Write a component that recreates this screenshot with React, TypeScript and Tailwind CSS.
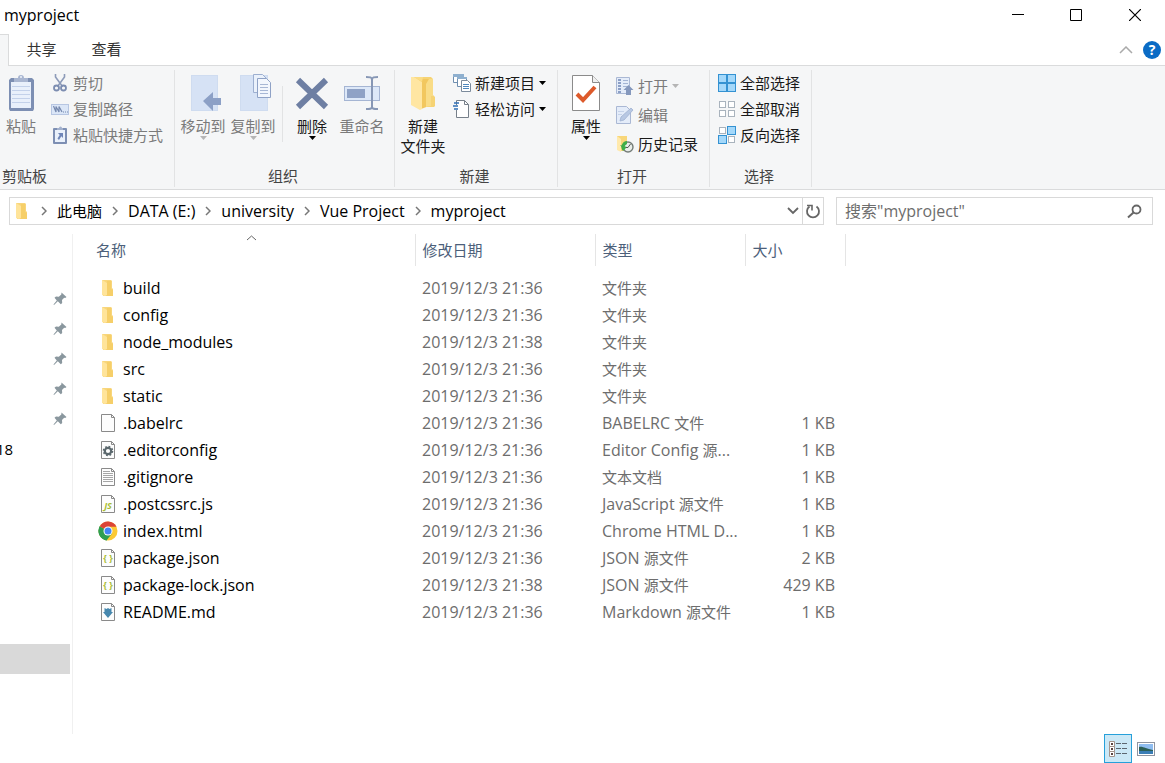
import React from "react";

type IconProps = { className?: string };

/* ---------- ribbon icons ---------- */

const PasteIcon = () => (
  <svg width="28" height="38" viewBox="0 0 28 38">
    <path d="M4 4h21l2 2v29l-1 2H3l-1-2V6z" fill="#7d8fb3" />
    <rect x="4" y="8" width="20" height="26" fill="#e9f0fb" />
    <path d="M5 12.500h18M5 16.500h18M5 20.500h18M5 24.500h18M5 28.500h18" stroke="#c3d1ea" />
    <path d="M7 8V4h4a3 3 0 0 1 6 0h4v4z" fill="#a9b6d1" />
    <circle cx="14" cy="3" r="1" fill="#eef2f9" />
  </svg>
);

const CutIcon = () => (
  <svg width="18" height="18" viewBox="0 0 18 18" fill="none">
    <path d="M4.500 0v3l7 9.500M13.500 0v3l-7 9.500" stroke="#8d9bb9" strokeWidth="1.600" />
    <circle cx="5.500" cy="14" r="2.500" stroke="#7c8db1" strokeWidth="1.800" />
    <circle cx="12.500" cy="14" r="2.500" stroke="#7c8db1" strokeWidth="1.800" />
  </svg>
);

const CopyPathIcon = () => (
  <svg width="18" height="18" viewBox="0 0 18 18" fill="none">
    <rect x="0.500" y="4.500" width="17" height="10" fill="#dbe6f7" stroke="#b7c6e2" />
    <path d="M2.500 6l2.500 6V6.500l3 5.500V6.500L11 12" stroke="#7588ae" strokeWidth="1.200" />
    <path d="M12 12h1M14 12h1M16 12h1" stroke="#7588ae" strokeWidth="1.200" />
  </svg>
);

const PasteShortcutIcon = () => (
  <svg width="18" height="20" viewBox="0 0 18 20">
    <rect x="2" y="3" width="14" height="16" rx="1" fill="#7d8fb3" />
    <rect x="4" y="5" width="10" height="12" fill="#eaf1fb" />
    <path d="M6 5V3h2a1.500 1.500 0 0 1 3 0h1v2z" fill="#a3b1cd" />
    <path d="M7 8h5v5l-1.700-1.700L8 15l-1.500-1.500L8.700 10z" fill="#6f86b8" />
  </svg>
);

const MoveToIcon = () => (
  <svg width="36" height="38" viewBox="0 0 36 38">
    <rect x="6.500" y="1.500" width="26" height="35" fill="#d6e2f5" stroke="#cfdcf0" />
    <path d="M18 27l10-9v6h10v7H28v6z" fill="#8ca0c6" />
  </svg>
);

const CopyToIcon = () => (
  <svg width="36" height="38" viewBox="0 0 36 38">
    <rect x="5.500" y="1.500" width="27" height="35" fill="#d6e2f5" stroke="#cfdcf0" />
    <path d="M18.500 0.500h9l4 4v14h-13z" fill="#eaf1fb" stroke="#9dafd0" />
    <path d="M22.500 4.500h9l4 4v15h-13z" fill="#f2f6fd" stroke="#8fa2c6" />
    <path d="M25 10.500h8M25 13.500h8M25 16.500h8M25 19.500h8" stroke="#a7b7d5" />
  </svg>
);

const DeleteIcon = () => (
  <svg width="36" height="38" viewBox="0 0 36 38">
    <path d="M4 6l28 27M32 6L4 33" stroke="#6e7fa3" strokeWidth="6" />
  </svg>
);

const RenameIcon = () => (
  <svg width="36" height="38" viewBox="0 0 36 38" fill="none">
    <rect x="0.500" y="12.500" width="35" height="14" fill="#dde8f8" stroke="#a5b5d3" />
    <rect x="3" y="15" width="18" height="9" fill="#8fa2c6" />
    <path d="M22 3c4 0 6 0 6 3v27c0 2-2 2-6 2M34 3c-4 0-6 0-6 3v27c0 2 2 2 6 2" stroke="#8797b5" strokeWidth="2" />
  </svg>
);

const NewFolderIcon = () => (
  <svg width="36" height="38" viewBox="0 0 36 38">
    <path d="M8 3h18l2 2v16l2 2v9l-1 1H12z" fill="#f6d374" />
    <path d="M13 5h11v27l-8 3z" fill="#f2c75e" />
    <path d="M24 5h4v17h-2v10l-5 1V10z" fill="#f9dc87" />
    <path d="M6 3h3l8 5v27l-2 1-9-5z" fill="#ffe6a2" />
    <path d="M9 3h9l-1 5z" fill="#fbdc85" />
  </svg>
);

const NewItemIcon = () => (
  <svg width="18" height="18" viewBox="0 0 18 18">
    <path d="M0.500 0.500h10v8h-10z" fill="#fff" stroke="#6f8fb0" />
    <path d="M0 0h11v3H0z" fill="#8fb0cf" />
    <path d="M4.500 3.500h9v9h-9z" fill="#fff" stroke="#6f8fb0" />
    <path d="M4 3h10v2H4z" fill="#8fb0cf" />
    <path d="M8.500 6.500h6l3 3v8h-9z" fill="#fff" stroke="#7c8b9c" />
    <path d="M10 10.500h6M10 12.500h6M10 14.500h6" stroke="#4f87bd" />
  </svg>
);

const EasyAccessIcon = () => (
  <svg width="18" height="18" viewBox="0 0 18 18" fill="none">
    <path d="M3.500 5V0.500h8l4 4v13h-12V10" fill="#fff" stroke="#77808a" />
    <path d="M11.500 0.500v4h4" stroke="#77808a" />
    <path d="M1 3h5M0 6h5M1 9h4" stroke="#2f6fb5" strokeWidth="1.500" />
  </svg>
);

const PropertiesIcon = () => (
  <svg width="30" height="38" viewBox="0 0 30 38" fill="none">
    <path d="M1.500 1.500h20l7 7v28h-27z" fill="#fff" stroke="#8b8b8b" />
    <path d="M21.500 1.500v7h7" fill="#f0f0f0" stroke="#8b8b8b" />
    <path d="M6 20l6 6 12-13" stroke="#dd5a2b" strokeWidth="4" />
  </svg>
);

const OpenIcon = () => (
  <svg width="18" height="18" viewBox="0 0 18 18">
    <path d="M0.500 0.500h13v16H0.500z" fill="#e4ecf9" stroke="#aab8d4" />
    <path d="M2 3h3M2 6h3M2 9h3M2 12h3M2 15h3" stroke="#8b9fc6" strokeWidth="2" />
    <path d="M7 3.500h5M7 6.500h5M7 9.500h5" stroke="#a4b5d4" />
    <path d="M12.500 8l5 5H15v5h-5v-5H7.500z" fill="#8598bd" />
  </svg>
);

const EditIcon = () => (
  <svg width="18" height="18" viewBox="0 0 18 18">
    <path d="M0.500 0.500h10l4 4v13H0.500z" fill="#e4ecf9" stroke="#aab8d4" />
    <path d="M4 15l1-4 10-9 2 2-9 10z" fill="#b8c8e3" stroke="#a0b1d1" strokeWidth="0.800" />
    <path d="M2 5.500h6M2 8.500h4" stroke="#c5d2e9" />
  </svg>
);

const HistoryIcon = () => (
  <svg width="18" height="18" viewBox="0 0 18 18" fill="none">
    <path d="M1 1h10v15H4l-3-2z" fill="#f8d679" />
    <path d="M1 1l4 3v13l-4-2z" fill="#ffe9ac" />
    <circle cx="12" cy="12" r="5" fill="#e9eeea" stroke="#747c78" strokeWidth="1.400" />
    <path d="M11 6a6 6 0 0 0-4 10l2-2a4 4 0 0 1 2-5z" fill="#3fae49" />
    <path d="M4 10l4 5 3-3z" fill="#3fae49" />
    <path d="M14.500 9L12 12.500h-2" stroke="#555" />
  </svg>
);

const SelectGrid: React.FC<{ filled: boolean[] }> = ({ filled }) => (
  <svg width="18" height="18" viewBox="0 0 18 18">
    {filled.map((on, i) => {
      const x = (i % 2) * 9;
      const y = Math.floor(i / 2) * 9;
      return on ? (
        <rect key={i} x={x + 0.5} y={y + 0.5} width="8" height="8" fill="#a4d8fa" stroke="#3492d2" />
      ) : (
        <rect key={i} x={x + 1.5} y={y + 1.5} width="6" height="6" fill="#fff" stroke="#a9b3bd" />
      );
    })}
  </svg>
);

/* ---------- file icons ---------- */

const FolderIcon: React.FC<IconProps> = ({ className }) => (
  <svg width="18" height="20" viewBox="0 0 18 20" className={className}>
    <path d="M3 2h9l1 1v7l1 1v7H4z" fill="#f8d67c" />
    <path d="M8 3h4v8l2 1v6H6z" fill="#f6cf69" />
    <path d="M3 2l5 3v12l-2 1-3-1z" fill="#ffe49a" />
  </svg>
);

const Page: React.FC<{ children?: React.ReactNode }> = ({ children }) => (
  <svg width="18" height="20" viewBox="0 0 18 20" fill="none">
    <path d="M2.500 1.500h10l3 3v14h-13z" fill="#fdfdfd" stroke="#8a8a8a" />
    <path d="M12.500 1.500v3h3" stroke="#8a8a8a" />
    {children}
  </svg>
);

const ChromeIcon = () => (
  <svg width="20" height="20" viewBox="0 0 20 20">
    <circle cx="10" cy="10" r="9.500" fill="#fcc934" />
    <path d="M10 10L1.770 5.250A9.500 9.500 0 0 0 8.500 19.380L14 12.500z" fill="#2f9e51" />
    <path d="M10 10L1.770 5.250A9.500 9.500 0 0 1 18.500 5.750H10z" fill="#dc4437" />
    <path d="M1.770 5.250L6 12.500 10 14 8.500 19.380A9.500 9.500 0 0 1 1.770 5.250z" fill="#2f9e51" />
    <circle cx="10" cy="10" r="4.500" fill="#fff" />
    <circle cx="10" cy="10" r="3.500" fill="#4285f4" />
  </svg>
);

const fileIcon = (kind: string) => {
  switch (kind) {
    case "folder":
      return <FolderIcon />;
    case "chrome":
      return <ChromeIcon />;
    case "config":
      return (
        <Page>
          <circle cx="9" cy="11" r="3.200" stroke="#5b686d" strokeWidth="2.200" />
          <circle cx="9" cy="11" r="4.600" stroke="#5b686d" strokeWidth="1.400" strokeDasharray="1.800 1.813" />
        </Page>
      );
    case "text":
      return (
        <Page>
          <path d="M4 4.500h7M4 6.500h10M4 8.500h10M4 10.500h10M4 12.500h10M4 14.500h10" stroke="#a6a6a6" />
        </Page>
      );
    case "js":
      return (
        <Page>
          <text x="9" y="15" textAnchor="middle" fontSize="9" fontWeight="bold" fontStyle="italic" fill="#a9bd35">
            JS
          </text>
        </Page>
      );
    case "json":
      return (
        <Page>
          <text x="9" y="13" textAnchor="middle" fontSize="9" fontWeight="bold" fill="#a9bd35">
            {"{ }"}
          </text>
        </Page>
      );
    case "md":
      return (
        <Page>
          <path d="M5.500 6l2 1 1.500-1 1.500 1 2-1v4H14l-5 6-5-6h1.500z" fill="#4788ae" />
        </Page>
      );
    default:
      return <Page />;
  }
};

const PinIcon = () => (
  <svg width="14" height="14" viewBox="0 0 14 14">
    <path
      d="M8.500 0.500l5 4.500-1.300 1-1-.3-2.200 2.300.2 3-1.400 1.200-3-2.900L1 13l-.5-.5 3.300-4L1.500 5.800 3 4.600l2.800.2 2.500-2.200z"
      fill="#8a979e"
    />
  </svg>
);

/* ---------- small parts ---------- */

const Caret: React.FC<IconProps> = ({ className }) => (
  <svg width="7" height="4" viewBox="0 0 7 4" className={className}>
    <path d="M0 0h7L3.500 4z" fill="currentColor" />
  </svg>
);

const Crumb = () => (
  <svg width="6" height="10" viewBox="0 0 6 10" fill="none" className="shrink-0">
    <path d="M1 1l4 4-4 4" stroke="#777" strokeWidth="1.500" />
  </svg>
);

type ButtonProps = {
  icon: React.ReactNode;
  label: React.ReactNode;
  disabled?: boolean;
  menu?: boolean;
};

const BigButton: React.FC<ButtonProps> = ({ icon, label, disabled, menu }) => (
  <button
    disabled={disabled}
    className="flex w-[50px] shrink-0 flex-col items-center whitespace-nowrap text-[#1a1a1a] disabled:text-[#7b7b7b]"
  >
    {icon}
    <span className="mt-1 leading-5">{label}</span>
    {menu && <Caret className={disabled ? "text-[#b5b5b5]" : "text-black"} />}
  </button>
);

const SmallButton: React.FC<ButtonProps> = ({ icon, label, disabled, menu }) => (
  <button
    disabled={disabled}
    className="flex h-[26px] items-center gap-1 whitespace-nowrap text-[#1a1a1a] disabled:text-[#7b7b7b]"
  >
    {icon}
    <span>{label}</span>
    {menu && <Caret className={disabled ? "text-[#b5b5b5]" : "text-black"} />}
  </button>
);

type GroupProps = {
  label: string;
  className: string;
  labelClassName?: string;
  children: React.ReactNode;
};

const Group: React.FC<GroupProps> = ({ label, className, labelClassName = "pr-[3px] text-center", children }) => (
  <section className={`flex shrink-0 flex-col justify-between border-r border-[#e2e3e4] ${className}`}>
    <div className="flex">{children}</div>
    <h2 className={`leading-[22px] text-[#444] ${labelClassName}`}>{label}</h2>
  </section>
);

// Latin runs are set one size larger than the Chinese ones
const Mixed: React.FC<{ text: string }> = ({ text }) => (
  <>
    {text.split(/([\u4e00-\u9fff]+)/).map((part, i) =>
      i % 2 ? (
        <span key={i} className="text-[15px]">
          {part}
        </span>
      ) : (
        part
      ),
    )}
  </>
);

const path = ["此电脑", "DATA (E:)", "university", "Vue Project", "myproject"];

const files = [
  { icon: "folder", name: "build", date: "2019/12/3 21:36", type: "文件夹", size: "" },
  { icon: "folder", name: "config", date: "2019/12/3 21:36", type: "文件夹", size: "" },
  { icon: "folder", name: "node_modules", date: "2019/12/3 21:38", type: "文件夹", size: "" },
  { icon: "folder", name: "src", date: "2019/12/3 21:36", type: "文件夹", size: "" },
  { icon: "folder", name: "static", date: "2019/12/3 21:36", type: "文件夹", size: "" },
  { icon: "page", name: ".babelrc", date: "2019/12/3 21:36", type: "BABELRC 文件", size: "1 KB" },
  { icon: "config", name: ".editorconfig", date: "2019/12/3 21:36", type: "Editor Config 源...", size: "1 KB" },
  { icon: "text", name: ".gitignore", date: "2019/12/3 21:36", type: "文本文档", size: "1 KB" },
  { icon: "js", name: ".postcssrc.js", date: "2019/12/3 21:36", type: "JavaScript 源文件", size: "1 KB" },
  { icon: "chrome", name: "index.html", date: "2019/12/3 21:36", type: "Chrome HTML D...", size: "1 KB" },
  { icon: "json", name: "package.json", date: "2019/12/3 21:36", type: "JSON 源文件", size: "2 KB" },
  { icon: "json", name: "package-lock.json", date: "2019/12/3 21:38", type: "JSON 源文件", size: "429 KB" },
  { icon: "md", name: "README.md", date: "2019/12/3 21:36", type: "Markdown 源文件", size: "1 KB" },
];

const TitleBar = () => (
  <header className="flex h-[34px] items-start justify-between">
    <h1 className="pl-1 text-base leading-[30px]">myproject</h1>
    <div className="flex">
      <button aria-label="最小化" className="flex h-[30px] w-[58px] items-center justify-center">
        <svg width="12" height="12" viewBox="0 0 12 12">
          <path d="M0 5.500h12" stroke="#000" />
        </svg>
      </button>
      <button aria-label="最大化" className="flex h-[30px] w-[58px] items-center justify-center">
        <svg width="12" height="12" viewBox="0 0 12 12">
          <path d="M0.500 0.500h11v11h-11z" fill="none" stroke="#000" />
        </svg>
      </button>
      <button aria-label="关闭" className="flex h-[30px] w-[60px] items-center justify-center">
        <svg width="12" height="12" viewBox="0 0 12 12">
          <path d="M0 0l12 12M12 0L0 12" stroke="#000" strokeWidth="1.200" />
        </svg>
      </button>
    </div>
  </header>
);

const Tabs = () => (
  <nav className="flex h-8">
    <div className="w-[9px] border-t border-r border-[#dadbdc] bg-[#f5f6f7]" />
    <div className="flex flex-1 items-center border-b border-[#dadbdc] text-[#333]">
      <button className="w-[65px]">共享</button>
      <button className="w-[65px]">查看</button>
      <button aria-label="折叠功能区" className="mr-[10px] ml-auto">
        <svg width="14" height="8" viewBox="0 0 14 8" fill="none">
          <path d="M1 7l6-6 6 6" stroke="#aaa" strokeWidth="1.500" />
        </svg>
      </button>
      <button
        aria-label="帮助"
        className="mr-1 flex size-[18px] items-center justify-center rounded-full bg-[#0a6bc5] text-sm font-bold text-white"
      >
        ?
      </button>
    </div>
  </nav>
);

const Ribbon = () => (
  <div className="flex h-[124px] overflow-hidden border-b border-[#dadbdc] bg-[#f5f6f7] pt-1 pb-[2px]">
    <Group label="剪贴板" className="w-[175px]" labelClassName="pl-[2px]">
      <div className="-ml-1 pt-1">
        <BigButton icon={<PasteIcon />} label="粘贴" disabled />
      </div>
      <div className="ml-[5px] flex flex-col items-start">
        <SmallButton icon={<CutIcon />} label="剪切" disabled />
        <SmallButton icon={<CopyPathIcon />} label="复制路径" disabled />
        <SmallButton icon={<PasteShortcutIcon />} label="粘贴快捷方式" disabled />
      </div>
    </Group>
    <Group label="组织" className="w-[220px]">
      <div className="flex pt-1 pl-[3px]">
        <BigButton icon={<MoveToIcon />} label="移动到" disabled menu />
        <BigButton icon={<CopyToIcon />} label="复制到" disabled menu />
        <div className="mx-1 mt-3 h-14 border-l border-[#e2e3e4]" />
        <BigButton icon={<DeleteIcon />} label="删除" menu />
        <BigButton icon={<RenameIcon />} label="重命名" disabled />
      </div>
    </Group>
    <Group label="新建" className="w-[163px]">
      <div className="pt-1 pl-[3px]">
        <BigButton
          icon={<NewFolderIcon />}
          label={
            <>
              新建
              <br />
              文件夹
            </>
          }
        />
      </div>
      <div className="ml-[5px] flex flex-col items-start">
        <SmallButton icon={<NewItemIcon />} label="新建项目" menu />
        <SmallButton icon={<EasyAccessIcon />} label="轻松访问" menu />
      </div>
    </Group>
    <Group label="打开" className="w-[152px]">
      <div className="pt-1 pl-[3px]">
        <BigButton icon={<PropertiesIcon />} label="属性" menu />
      </div>
      <div className="ml-[5px] flex flex-col items-start gap-[3px] pt-[3px]">
        <SmallButton icon={<OpenIcon />} label="打开" disabled menu />
        <SmallButton icon={<EditIcon />} label="编辑" disabled />
        <SmallButton icon={<HistoryIcon />} label="历史记录" />
      </div>
    </Group>
    <Group label="选择" className="w-[102px]">
      <div className="flex flex-col items-start pl-2">
        <SmallButton icon={<SelectGrid filled={[true, true, true, true]} />} label="全部选择" />
        <SmallButton icon={<SelectGrid filled={[false, false, false, false]} />} label="全部取消" />
        <SmallButton icon={<SelectGrid filled={[false, true, true, false]} />} label="反向选择" />
      </div>
    </Group>
  </div>
);

const AddressRow = () => (
  <div className="flex gap-3 pt-[7px] pr-3 pl-[9px]">
    <div className="flex h-7 min-w-0 flex-1 items-center border border-[#d9d9d9]">
      <FolderIcon className="ml-[3px] shrink-0" />
      <ol className="flex flex-1 items-center">
        {path.map((item) => (
          <li key={item} className="flex items-center whitespace-nowrap">
            <span className="flex w-[26px] justify-center">
              <Crumb />
            </span>
            <a href="#" className="text-base text-black">
              <Mixed text={item} />
            </a>
          </li>
        ))}
      </ol>
      <button aria-label="以前的位置" className="mr-[3px]">
        <svg width="12" height="8" viewBox="0 0 12 8" fill="none">
          <path d="M1 1l5 5 5-5" stroke="#666" strokeWidth="1.800" />
        </svg>
      </button>
      <button aria-label="刷新" className="flex h-full w-[21px] items-center justify-center border-l border-[#d9d9d9]">
        <svg width="16" height="16" viewBox="0 0 16 16" fill="none">
          <path d="M11.500 3.500a6 6 0 1 1-7 0" stroke="#666" strokeWidth="1.800" />
          <path d="M2 2.500h5v5" stroke="#666" strokeWidth="1.600" />
        </svg>
      </button>
    </div>
    <label className="flex h-7 w-[317px] items-center border border-[#d9d9d9] pr-[10px] pl-2">
      <input
        type="search"
        aria-label="搜索"
        placeholder={'搜索"myproject"'}
        className="min-w-0 flex-1 text-base outline-none placeholder:text-[#6d6d6d]"
      />
      <svg width="15" height="15" viewBox="0 0 15 15" fill="none">
        <circle cx="9.500" cy="5.500" r="4" stroke="#666" strokeWidth="1.800" />
        <path d="M6.500 8.500l-5.500 5" stroke="#666" strokeWidth="2" />
      </svg>
    </label>
  </div>
);

const Sidebar = () => (
  <aside className="w-[73px] shrink-0 overflow-hidden border-r border-[#f0f0f0] pt-[50px]">
    {[0, 1, 2, 3, 4].map((i) => (
      <div key={i} className="flex h-[30px] items-center justify-end pr-[5px]">
        <PinIcon />
      </div>
    ))}
    <div className="-ml-1 h-[30px] text-[15px] leading-[30px]">18</div>
    <div className="h-[180px]" />
    <div className="mr-[2px] h-[30px] bg-[#d9d9d9]" />
  </aside>
);

const FileTable = () => (
  <table className="w-[772px] table-fixed self-start">
    <colgroup>
      <col className="w-[342px]" />
      <col className="w-[180px]" />
      <col className="w-[150px]" />
      <col className="w-[100px]" />
    </colgroup>
    <thead>
      <tr className="h-8 text-left text-[#4c607a]">
        <th className="border-r border-[#e5e5e5] pl-[23px] font-normal">
          <div className="relative">
            名称
            <svg width="11" height="6" viewBox="0 0 11 6" fill="none" className="absolute -top-1 left-[150px]">
              <path d="M1 5l4.500-4L10 5" stroke="#666" />
            </svg>
          </div>
        </th>
        <th className="border-r border-[#e5e5e5] pl-[7px] font-normal">修改日期</th>
        <th className="border-r border-[#e5e5e5] pl-[7px] font-normal">类型</th>
        <th className="border-r border-[#e5e5e5] pl-[7px] font-normal">大小</th>
      </tr>
    </thead>
    <tbody className="text-base text-[#6d6d6d] before:block before:h-2">
      {files.map((file) => (
        <tr key={file.name} className="h-[27px] whitespace-nowrap">
          <td className="p-0 pl-6 text-black">
            <div className="flex items-center gap-[5px]">
              <span className="flex w-[21px] justify-center">{fileIcon(file.icon)}</span>
              {file.name}
            </div>
          </td>
          <td className="p-0 pl-[7px]">{file.date}</td>
          <td className="p-0 pl-[7px]">
            <Mixed text={file.type} />
          </td>
          <td className="p-0 pr-[10px] text-right">{file.size}</td>
        </tr>
      ))}
    </tbody>
  </table>
);

const ViewSwitch = () => (
  <footer className="flex h-[29px] items-center justify-end gap-1 pr-[9px]">
    <button
      aria-label="详细信息"
      className="flex h-[29px] w-7 items-center justify-center border border-[#26a0da] bg-[#cbe8f6]"
    >
      <svg width="18" height="18" viewBox="0 0 18 18">
        <path d="M0.500 1.500h5v5h-5zM0.500 6.500h5v5h-5zM0.500 11.500h5v5h-5z" fill="#fff" stroke="#a3948c" />
        <path d="M2 4h2M2 9h2M2 14h2" stroke="#5a4440" strokeWidth="2" />
        <path d="M7 3.500h5M13 3.500h5M7 8.500h5M13 8.500h5M7 13.500h5M13 13.500h5" stroke="#5c6670" />
      </svg>
    </button>
    <button aria-label="大缩略图">
      <svg width="20" height="16" viewBox="0 0 20 16">
        <rect x="1.500" y="1.500" width="17" height="13" fill="#fff" stroke="#8e94a0" />
        <path d="M3 3h14v10H3z" fill="#8fbdf0" />
        <path d="M3 6c4-1 7 2 14 3v2H3z" fill="#2b5f56" />
        <path d="M3 10h14v3H3z" fill="#3a7db5" />
      </svg>
    </button>
  </footer>
);

export default function App() {
  return (
    <div className="flex min-h-screen flex-col overflow-hidden bg-white font-['Open_Sans','Noto_Sans_CJK_SC',sans-serif] text-[15px] text-black">
      <TitleBar />
      <Tabs />
      <Ribbon />
      <AddressRow />
      <main className="mt-[9px] flex flex-1">
        <Sidebar />
        <FileTable />
      </main>
      <ViewSwitch />
    </div>
  );
}
